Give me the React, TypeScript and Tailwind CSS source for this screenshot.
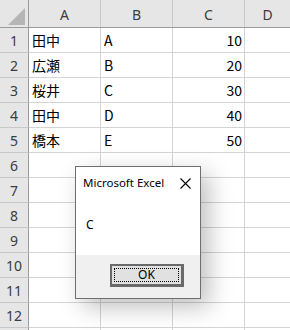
import React from "react";

const rows: [string, string, string][] = [
  ["田中", "A", "10"],
  ["広瀬", "B", "20"],
  ["桜井", "C", "30"],
  ["田中", "D", "40"],
  ["橋本", "E", "50"],
];

const cellFont = { fontFamily: '"Noto Sans CJK JP", "Noto Sans", sans-serif' };

export default function App() {
  const allRows = Array.from({ length: 13 }, (_, i) => i + 1);
  return (
    <div className="relative w-[290px] h-[330px] overflow-hidden bg-white" style={{ fontFamily: '"Noto Sans", "Noto Sans CJK JP", sans-serif' }}>
      {/* Column header */}
      <div className="flex h-[28px] bg-[#e6e6e6] border-b border-[#9b9b9b]">
        <div className="relative w-[29px] shrink-0 border-r border-[#9b9b9b]">
          <svg className="absolute left-[8px] top-[8px]" width="17" height="17" viewBox="0 0 17 17">
            <polygon points="17,0 17,17 0,17" fill="#b5b5b5" />
          </svg>
        </div>
        {["A", "B", "C"].map((c) => (
          <div key={c} className="w-[72px] shrink-0 border-r border-[#c8c8c8] flex items-center justify-center text-[14px] text-[#3c3c3c] pt-[2px]">
            {c}
          </div>
        ))}
        <div className="flex-1 flex items-center justify-center text-[14px] text-[#3c3c3c] pt-[2px]">D</div>
      </div>
      {allRows.map((n) => {
        const r = rows[n - 1];
        return (
          <div key={n} className="flex h-[25px]">
            <div className="w-[29px] shrink-0 bg-[#e6e6e6] border-r border-b border-r-[#9b9b9b] border-b-[#c8c8c8] flex items-center justify-center text-[14px] text-[#3c3c3c]">
              {n <= 12 ? n : ""}
            </div>
            <div className="w-[72px] shrink-0 border-r border-b border-[#d4d4d4] flex items-center pl-[3px] text-[14px] text-black" style={cellFont}>
              {r ? r[0] : ""}
            </div>
            <div className="w-[72px] shrink-0 border-r border-b border-[#d4d4d4] flex items-center pl-[3px] text-[14px] text-black" style={cellFont}>
              {r ? r[1] : ""}
            </div>
            <div className="w-[72px] shrink-0 border-r border-b border-[#d4d4d4] flex items-center justify-end pr-[2px] text-[14px] text-black" style={cellFont}>
              {r ? r[2] : ""}
            </div>
            <div className="flex-1 border-b border-[#d4d4d4]" />
          </div>
        );
      })}

      {/* Message box */}
      <div className="absolute left-[75px] top-[166px] w-[126px] h-[133px] border border-[#6f6f6f] bg-white flex flex-col shadow-[8px_8px_22px_rgba(0,0,0,0.25)]">
        <div className="h-[31px] flex items-center justify-between pl-[7px] pr-[9px] pt-[1px]">
          <span className="text-[11.5px] text-black">Microsoft Excel</span>
          <svg width="11" height="11" viewBox="0 0 11 11">
            <path d="M0.5 0.5 L10.5 10.5 M10.5 0.5 L0.5 10.5" stroke="#000" strokeWidth="1.1" />
          </svg>
        </div>
        <div className="flex-1 pl-[10px] pt-[21px] text-[12px] text-black leading-none">C</div>
        <div className="h-[43px] bg-[#f0f0f0] flex items-start pt-[9px] pl-[34px]">
          <div className="w-[74px] h-[23px] border-2 border-[#6a6a6a] border-r-[3px] border-b-[3px] bg-[#e1e1e1] p-[2px]">
            <div className="w-full h-full border border-dotted border-black flex items-center justify-center text-[12px] text-black leading-none">
              OK
            </div>
          </div>
        </div>
      </div>
    </div>
  );
}
